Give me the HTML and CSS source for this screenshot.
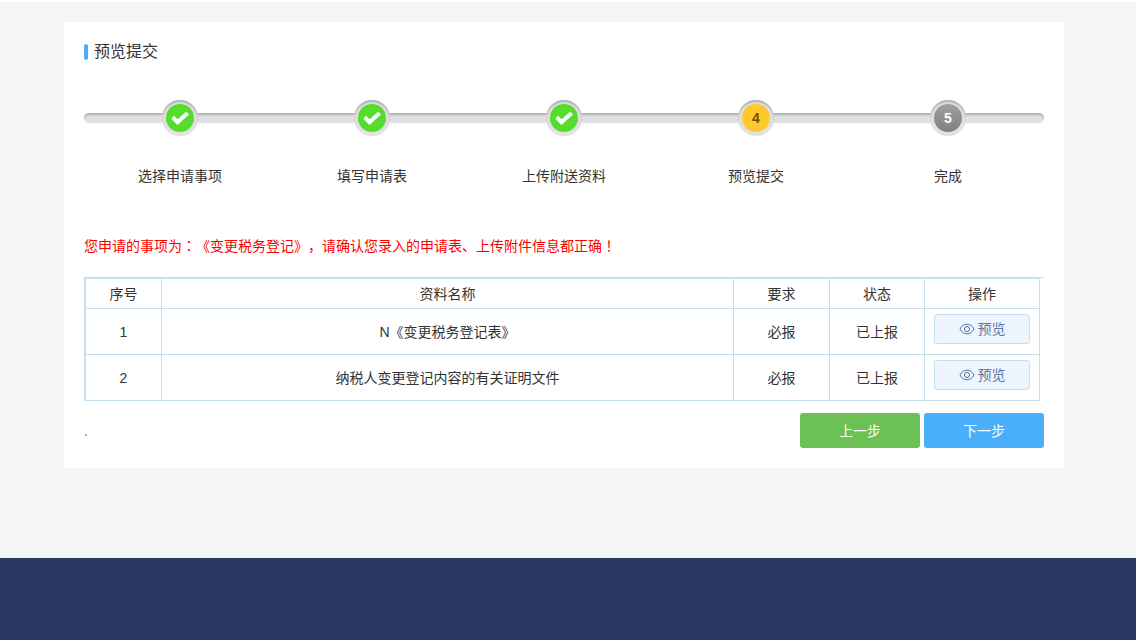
FILE: index.html
```html
<!DOCTYPE html>
<html lang="zh-CN">
<head>
<meta charset="utf-8">
<title>预览提交</title>
<link rel="stylesheet" href="styles.css">
</head>
<body>
<svg class="sprite" aria-hidden="true">
  <symbol id="check" viewBox="0 0 28 28"><path d="M5.2 14.6 8 11.800l3.600 3.500 8.600-7.500 2.800 2.800L11.500 21z" fill="#fff"/></symbol>
  <symbol id="eye" viewBox="0 0 16 12"><g fill="none" stroke="currentColor" stroke-width="1"><path d="M1 6C2.600 2.700 5 1.200 8 1.200S13.400 2.700 15 6C13.400 9.300 11 10.800 8 10.800S2.600 9.300 1 6z"/><circle cx="8" cy="6" r="2.600"/></g></symbol>
</svg>
<main class="card">
  <h1 class="title">预览提交</h1>
  <ol class="steps">
    <li class="step"><span class="dot done"><svg class="check"><use href="#check"/></svg></span><span class="label">选择申请事项</span></li>
    <li class="step"><span class="dot done"><svg class="check"><use href="#check"/></svg></span><span class="label">填写申请表</span></li>
    <li class="step"><span class="dot done"><svg class="check"><use href="#check"/></svg></span><span class="label">上传附送资料</span></li>
    <li class="step"><span class="dot current">4</span><span class="label">预览提交</span></li>
    <li class="step"><span class="dot pending">5</span><span class="label">完成</span></li>
  </ol>
  <p class="notice">您申请的事项为<span class="mark" lang="ja">：</span>《变更税务登记》，请确认您录入的申请表、上传附件信息都正确<span class="mark" lang="ja">！</span></p>
  <div class="grid">
    <table class="files">
      <colgroup><col class="c-no"><col><col class="c-need"><col class="c-state"><col class="c-act"></colgroup>
      <thead><tr><th>序号</th><th>资料名称</th><th>要求</th><th>状态</th><th>操作</th></tr></thead>
      <tbody>
        <tr><td>1</td><td>N《变更税务登记表》</td><td>必报</td><td>已上报</td><td class="act"><button type="button" class="preview"><svg class="eye"><use href="#eye"/></svg>预览</button></td></tr>
        <tr><td>2</td><td>纳税人变更登记内容的有关证明文件</td><td>必报</td><td>已上报</td><td class="act"><button type="button" class="preview"><svg class="eye"><use href="#eye"/></svg>预览</button></td></tr>
      </tbody>
    </table>
  </div>
  <div class="actions">
    <a class="more" href="#">.</a>
    <button type="button" class="btn prev">上一步</button>
    <button type="button" class="btn next">下一步</button>
  </div>
</main>
<footer class="footer"></footer>
</body>
</html>
```

FILE: styles.css
```css
* { box-sizing: border-box; }
body {
  margin: 0;
  min-height: 100vh;
  display: flex;
  flex-direction: column;
  border-top: 2px solid #fff;
  background: #f5f5f5;
  color: #333;
  font: 14px/20px "Liberation Sans", "Noto Sans CJK SC", sans-serif;
  text-spacing-trim: space-all;
}
button { font: inherit; cursor: pointer; }
.sprite { display: none; }
.card {
  margin: 20px 72px 90px 64px;
  padding: 20px;
  background: #fff;
}
.title {
  display: flex;
  align-items: center;
  gap: 6px;
  margin: 0 0 38px;
  font-size: 16px;
  line-height: 20px;
  font-weight: 400;
}
.title::before {
  content: "";
  width: 4px;
  height: 16px;
  border-radius: 2px;
  background: #48aff8;
}
.steps {
  display: grid;
  grid-template-columns: repeat(5, 1fr);
  margin: 0 0 49px;
  padding: 0;
  list-style: none;
  position: relative;
}
.steps::before {
  content: "";
  position: absolute;
  top: 13px;
  left: 0;
  right: 0;
  height: 10px;
  border-radius: 5px;
  background: #e1e1e1;
  box-shadow: inset 0 2px 2px #b0b0b0;
}
.step {
  display: flex;
  flex-direction: column;
  align-items: center;
  gap: 30px;
}
.dot {
  position: relative;
  z-index: 0;
  display: grid;
  place-items: center;
  width: 36px;
  height: 36px;
  border-radius: 50%;
  background: #e1e1e1;
  box-shadow: inset 0 2px 2px #b0b0b0;
  font-weight: 700;
}
.dot::before {
  content: "";
  position: absolute;
  inset: 4px;
  z-index: -1;
  border-radius: 50%;
  background: #56dc2e;
}
.current { color: #6b4c00; }
.current::before { background: #ffc92e; }
.pending { color: #fff; }
.pending::before { background: linear-gradient(#a0a0a0, #808080); }
.check { width: 28px; height: 28px; }
.notice { margin: 0 0 21px; color: #f00; }
.mark { font-family: "Noto Sans CJK JP", sans-serif; }
.grid {
  border: solid #c5e0ec;
  border-width: 1px 0 0 1px;
  padding-right: 4px;
}
.files {
  width: 100%;
  border-collapse: collapse;
  table-layout: fixed;
  text-align: center;
}
.c-no { width: 76px; }
.c-need { width: 96px; }
.c-state { width: 95px; }
.c-act { width: 115px; }
.files th, .files td {
  border: 1px solid #c5e0ec;
  padding: 0;
  font-weight: 400;
}
.files th { height: 30px; }
.files td { height: 46px; }
.files .act { padding: 5px 0 10px; }
.preview {
  display: flex;
  align-items: center;
  justify-content: center;
  gap: 3px;
  width: 96px;
  height: 30px;
  margin: 0 auto;
  padding: 0;
  border: 1px solid #c5e0ec;
  border-radius: 3px;
  background: #eef5fe;
  color: #5a789f;
}
.eye { width: 16px; height: 12px; }
.actions {
  display: flex;
  align-items: center;
  gap: 4px;
  margin-top: 12px;
}
.more {
  margin-right: auto;
  color: #337ab7;
  text-decoration: none;
}
.btn {
  width: 120px;
  height: 35px;
  border: 0;
  border-radius: 3px;
  color: #fff;
}
.prev { background: #6cc155; }
.next { background: #48aff8; }
.footer {
  flex: 1;
  min-height: 82px;
  background: #283862;
}
```
